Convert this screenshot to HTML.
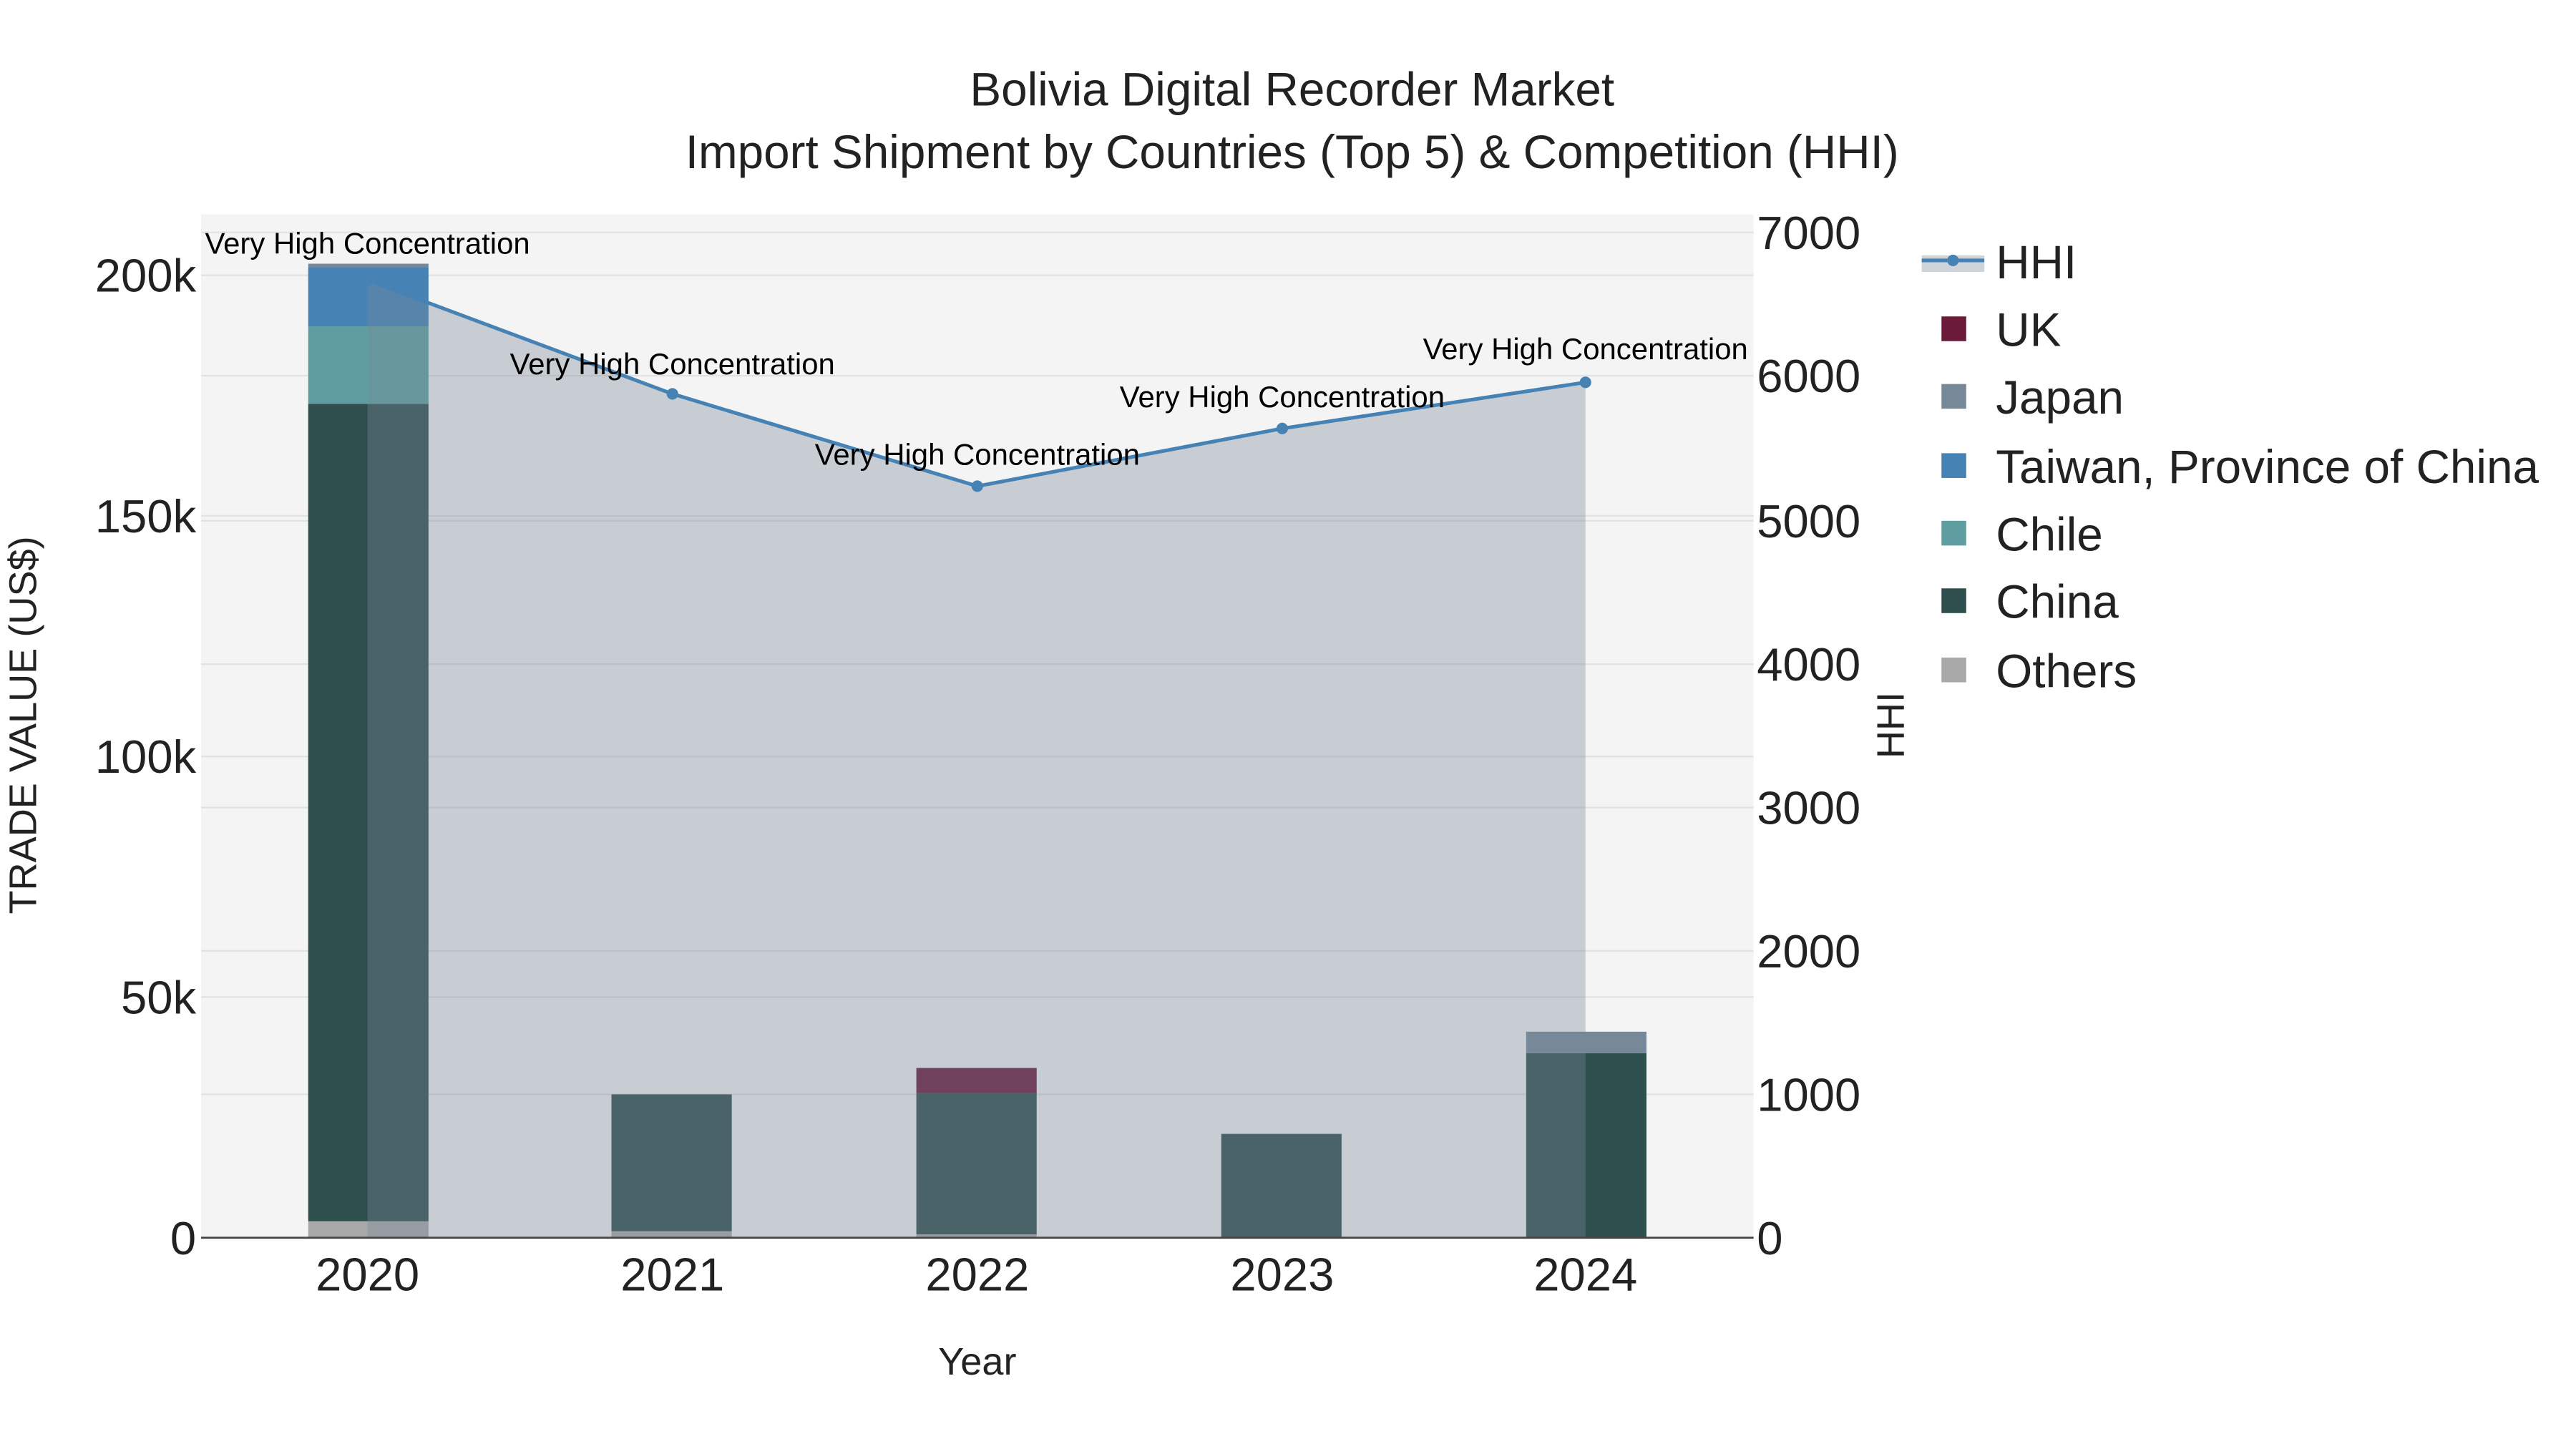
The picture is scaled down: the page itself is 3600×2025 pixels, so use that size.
<!DOCTYPE html>
<html><head><meta charset="utf-8"><style>html,body{margin:0;padding:0;background:#fff}svg{display:block}</style></head>
<body>
<svg width="3600" height="2025" viewBox="0 0 1563 879.2" preserveAspectRatio="none" xmlns="http://www.w3.org/2000/svg" font-family="Liberation Sans, sans-serif">
<rect width="1563" height="880" fill="#fff"/>
<rect x="122" y="130" width="942" height="621" fill="#f4f4f4"/>
<g stroke="#e2e2e2" stroke-width="1">
<line x1="122" x2="1064" y1="605" y2="605"/><line x1="122" x2="1064" y1="459" y2="459"/><line x1="122" x2="1064" y1="313" y2="313"/><line x1="122" x2="1064" y1="167" y2="167"/>
<line x1="122" x2="1064" y1="664" y2="664"/><line x1="122" x2="1064" y1="577" y2="577"/><line x1="122" x2="1064" y1="490" y2="490"/><line x1="122" x2="1064" y1="403" y2="403"/><line x1="122" x2="1064" y1="316" y2="316"/><line x1="122" x2="1064" y1="228" y2="228"/><line x1="122" x2="1064" y1="141" y2="141"/>
</g>
<rect x="187" y="741" width="73" height="10" fill="#a9a9a9"/>
<rect x="187" y="245" width="73" height="496" fill="#2f4f4f"/>
<rect x="187" y="198" width="73" height="47" fill="#5f9ea0"/>
<rect x="187" y="162" width="73" height="36" fill="#4682b4"/>
<rect x="187" y="160" width="73" height="2" fill="#778899"/>
<rect x="371" y="747" width="73" height="4" fill="#a9a9a9"/>
<rect x="371" y="664" width="73" height="83" fill="#2f4f4f"/>
<rect x="556" y="749" width="73" height="2" fill="#a9a9a9"/>
<rect x="556" y="663" width="73" height="86" fill="#2f4f4f"/>
<rect x="556" y="648" width="73" height="15" fill="#6b1a3a"/>
<rect x="741" y="688" width="73" height="63" fill="#2f4f4f"/>
<rect x="926" y="639" width="73" height="112" fill="#2f4f4f"/>
<rect x="926" y="626" width="73" height="13" fill="#778899"/>
<polygon points="223,170 408,239 593,295 778,260 962,232 962,751 223,751" fill="#778899" fill-opacity="0.36"/>
<polyline points="223,170 408,239 593,295 778,260 962,232" fill="none" stroke="#4682b4" stroke-width="2.2"/>
<g fill="#4682b4"><circle cx="223" cy="170" r="3.5"/><circle cx="408" cy="239" r="3.5"/><circle cx="593" cy="295" r="3.5"/><circle cx="778" cy="260" r="3.5"/><circle cx="962" cy="232" r="3.5"/></g>
<line x1="122" x2="1064" y1="751" y2="751" stroke="#444" stroke-width="1.2"/>
<g font-size="18.2" text-anchor="middle" fill="#000">
<text x="223" y="154">Very High Concentration</text>
<text x="408" y="227">Very High Concentration</text>
<text x="593" y="282">Very High Concentration</text>
<text x="778" y="247">Very High Concentration</text>
<text x="962" y="218">Very High Concentration</text>
</g>
<g font-size="28.5" text-anchor="middle" fill="#222">
<text x="784" y="64">Bolivia Digital Recorder Market</text>
<text x="784" y="102">Import Shipment by Countries (Top 5) &amp; Competition (HHI)</text>
</g>
<g font-size="28.3" text-anchor="end" fill="#222">
<text x="119" y="761">0</text><text x="119" y="615">50k</text><text x="119" y="469">100k</text><text x="119" y="323">150k</text><text x="119" y="177">200k</text>
</g>
<g font-size="28.3" text-anchor="start" fill="#222">
<text x="1066" y="761">0</text><text x="1066" y="674">1000</text><text x="1066" y="587">2000</text><text x="1066" y="500">3000</text><text x="1066" y="413">4000</text><text x="1066" y="326">5000</text><text x="1066" y="238">6000</text><text x="1066" y="151">7000</text>
</g>
<g font-size="28.3" text-anchor="middle" fill="#222">
<text x="223" y="783">2020</text><text x="408" y="783">2021</text><text x="593" y="783">2022</text><text x="778" y="783">2023</text><text x="962" y="783">2024</text>
</g>
<text x="593" y="834" font-size="23.5" text-anchor="middle" fill="#222">Year</text>
<text transform="translate(22,440) rotate(-90)" font-size="23.5" text-anchor="middle" fill="#222">TRADE VALUE (US$)</text>
<text transform="translate(1155,440) rotate(-90)" font-size="23.5" text-anchor="middle" fill="#222">HHI</text>
<rect x="1166" y="155" width="38" height="10" fill="#778899" fill-opacity="0.36"/>
<line x1="1166" x2="1204" y1="158" y2="158" stroke="#4682b4" stroke-width="2.2"/>
<circle cx="1185" cy="158" r="3.5" fill="#4682b4"/>
<rect x="1178" y="192" width="15" height="15" fill="#6b1a3a"/>
<rect x="1178" y="233" width="15" height="15" fill="#778899"/>
<rect x="1178" y="275" width="15" height="15" fill="#4682b4"/>
<rect x="1178" y="316" width="15" height="15" fill="#5f9ea0"/>
<rect x="1178" y="357" width="15" height="15" fill="#2f4f4f"/>
<rect x="1178" y="399" width="15" height="15" fill="#a9a9a9"/>
<g font-size="28.5" fill="#222">
<text x="1211" y="169">HHI</text><text x="1211" y="210">UK</text><text x="1211" y="251">Japan</text><text x="1211" y="293">Taiwan, Province of China</text><text x="1211" y="334">Chile</text><text x="1211" y="375">China</text><text x="1211" y="417">Others</text>
</g>
</svg>
</body></html>
